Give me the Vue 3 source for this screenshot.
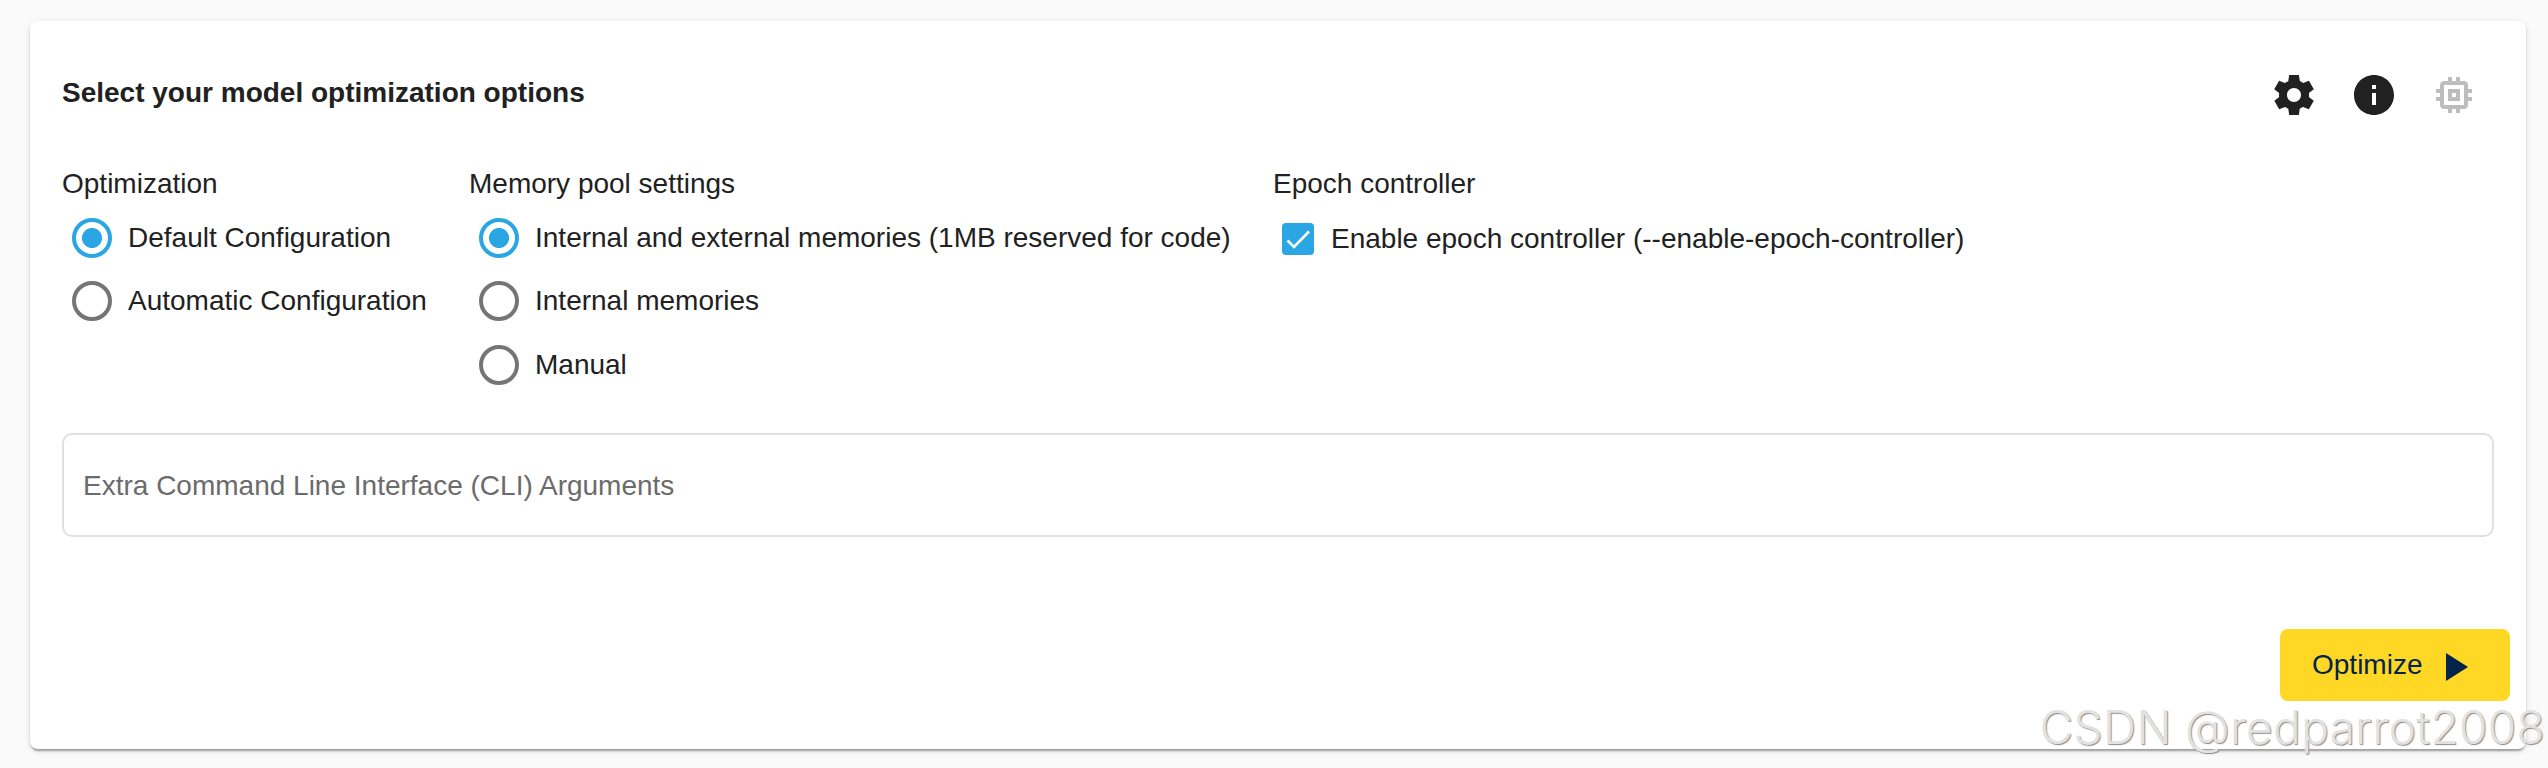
<template>
  <div class="page">
    <section class="card">
      <header class="card-header">
        <h2 class="title">Select your model optimization options</h2>
        <div class="actions">
          <button
            v-for="icon in icons"
            :key="icon.name"
            class="icon-btn"
            :disabled="icon.disabled"
            :aria-label="icon.name"
          >
            <svg viewBox="0 0 24 24"><path :d="icon.path" /></svg>
          </button>
        </div>
      </header>

      <div class="options">
        <div v-for="group in groups" :key="group.key" class="group" :class="group.key">
          <div class="group-label">{{ group.label }}</div>
          <label v-for="opt in group.options" :key="opt" class="option">
            <input v-model="selected[group.key]" class="radio" type="radio" :name="group.key" :value="opt">
            <span class="option-text">{{ opt }}</span>
          </label>
        </div>

        <div class="group">
          <div class="group-label">Epoch controller</div>
          <label class="option option-check">
            <input v-model="epochController" class="native-check" type="checkbox">
            <span class="checkbox" :class="{ checked: epochController }">
              <svg v-if="epochController" viewBox="0 0 32 32">
                <path d="M5.5 17.5L12 24L27 8.5" />
              </svg>
            </span>
            <span class="option-text">Enable epoch controller (--enable-epoch-controller)</span>
          </label>
        </div>
      </div>

      <input
        v-model="cliArgs"
        class="cli-input"
        type="text"
        placeholder="Extra Command Line Interface (CLI) Arguments"
      >

      <footer class="card-footer">
        <button class="optimize-btn">
          <span>Optimize</span>
          <svg viewBox="0 0 24 24"><path d="M8 5v14l11-7z" /></svg>
        </button>
      </footer>
    </section>

    <div class="watermark">CSDN @redparrot2008</div>
  </div>
</template>

<script setup>
import { reactive, ref } from 'vue'

const icons = [
  {
    name: 'settings',
    path: 'M19.44 12.99l.01-.02c.04-.32.08-.64.08-.98 0-.34-.03-.66-.07-.99l.01.02 2.44-1.92-2.43-4.22-2.87 1.16.01.01c-.52-.4-1.09-.74-1.71-1h.01L14.44 2H9.57l-.44 3.07h.01c-.62.26-1.19.6-1.71 1l.01-.01-2.88-1.17-2.44 4.22 2.44 1.92.01-.02c-.04.33-.07.65-.07.99 0 .34.03.66.08.98l.01.02-2.1 1.65-.33.26 2.43 4.2 2.88-1.15-.02-.04c.53.41 1.1.75 1.73 1.01h-.03L9.58 22h4.85s.03-.18.06-.42l.38-2.65h-.01c.62-.26 1.2-.6 1.73-1.01l-.02.04 2.88 1.15 2.43-4.2s-.14-.12-.33-.26l-2.11-1.66zM12 15.5c-1.93 0-3.5-1.57-3.5-3.5s1.57-3.5 3.5-3.5 3.5 1.57 3.5 3.5-1.57 3.5-3.5 3.5z',
  },
  {
    name: 'info',
    path: 'M12 2C6.48 2 2 6.48 2 12s4.48 10 10 10 10-4.48 10-10S17.52 2 12 2zm1 15h-2v-6h2v6zm0-8h-2V7h2v2z',
  },
  {
    name: 'memory',
    disabled: true,
    path: 'M15 9H9v6h6V9zm-2 4h-2v-2h2v2zm8-2V9h-2V7c0-1.1-.9-2-2-2h-2V3h-2v2h-2V3H9v2H7c-1.1 0-2 .9-2 2v2H3v2h2v2H3v2h2v2c0 1.1.9 2 2 2h2v2h2v-2h2v2h2v-2h2c1.1 0 2-.9 2-2v-2h2v-2h-2v-2h2zm-4 6H7V7h10v10z',
  },
]

const groups = [
  {
    key: 'optimization',
    label: 'Optimization',
    options: ['Default Configuration', 'Automatic Configuration'],
  },
  {
    key: 'memory',
    label: 'Memory pool settings',
    options: [
      'Internal and external memories (1MB reserved for code)',
      'Internal memories',
      'Manual',
    ],
  },
]

const selected = reactive({
  optimization: 'Default Configuration',
  memory: 'Internal and external memories (1MB reserved for code)',
})
const epochController = ref(true)
const cliArgs = ref('')
</script>

<style>
body {
  background: #fafafa;
}
</style>

<style scoped>
.page {
  position: relative;
  box-sizing: border-box;
  height: 768px;
  padding: 21px 22px 19px 30px;
  overflow: hidden;
  background: #fafafa;
  color: #212121;
  font-family: "Liberation Sans", Arial, sans-serif;
  font-size: 28px;
}

.card {
  display: flex;
  flex-direction: column;
  box-sizing: border-box;
  height: 728px;
  padding: 32px 16px 48px 32px;
  border-radius: 8px;
  background: #fff;
  box-shadow: 0 4px 2px -2px rgba(0, 0, 0, 0.2), 0 2px 2px 0 rgba(0, 0, 0, 0.14),
    0 2px 6px 0 rgba(0, 0, 0, 0.12);
}

.card-header {
  display: flex;
  justify-content: space-between;
  height: 84px;
  padding-right: 16px;
}

.title {
  margin: 24px 0 0;
  font-size: 28px;
  font-weight: bold;
  line-height: 32px;
}

.actions {
  display: flex;
}

.icon-btn {
  width: 80px;
  height: 84px;
  padding: 0;
  border: none;
  background: none;
  color: #212121;
}

.icon-btn:disabled {
  color: #bdbdbd;
}

.icon-btn svg {
  display: block;
  width: 48px;
  height: 48px;
  margin: 0 auto;
  fill: currentColor;
}

.options {
  display: flex;
  box-sizing: border-box;
  height: 296px;
  padding-top: 31px;
}

.group.optimization {
  width: 407px;
}

.group.memory {
  width: 804px;
}

.group-label {
  height: 38px;
  line-height: 32px;
}

.option {
  display: flex;
  align-items: center;
  height: 63.5px;
  padding-left: 10px;
}

.option-text {
  line-height: 32px;
  white-space: nowrap;
}

.radio {
  flex: none;
  appearance: none;
  box-sizing: border-box;
  width: 40px;
  height: 40px;
  margin: 0 16px 0 0;
  border: 4px solid #757575;
  border-radius: 50%;
}

.radio:checked {
  border-color: #29a6e3;
  background: radial-gradient(circle, #29a6e3 9.6px, transparent 10.4px);
}

.option-check {
  height: 66px;
  padding-left: 9px;
}

.native-check {
  display: none;
}

.checkbox {
  flex: none;
  box-sizing: border-box;
  width: 32px;
  height: 32px;
  margin-right: 17px;
  border: 4px solid #757575;
  border-radius: 4px;
}

.checkbox.checked {
  border: none;
  background: #29a6e3;
}

.checkbox svg {
  display: block;
  fill: none;
  stroke: #fff;
  stroke-width: 2.6;
}

.cli-input {
  box-sizing: border-box;
  width: 2432px;
  height: 104px;
  padding: 1px 19px 0;
  border: 2px solid #e0e0e0;
  border-radius: 10px;
  outline: none;
  background: #fff;
  color: #212121;
  font-family: inherit;
  font-size: 28px;
}

.cli-input::placeholder {
  color: #6b6b6b;
  opacity: 1;
}

.card-footer {
  display: flex;
  justify-content: flex-end;
  margin-top: auto;
}

.optimize-btn {
  display: flex;
  gap: 8px;
  width: 230px;
  height: 72px;
  padding: 0 0 0 32px;
  border: none;
  border-radius: 8px;
  background: #ffd825;
  color: #03234b;
  font-family: inherit;
  font-size: 28px;
  line-height: 72px;
}

.optimize-btn svg {
  width: 48px;
  height: 48px;
  margin-top: 14px;
  fill: currentColor;
}

.watermark {
  position: absolute;
  right: 3px;
  bottom: 9px;
  color: #e2e2e2;
  font-family: Inter, "Noto Sans", sans-serif;
  font-size: 46px;
  font-weight: 300;
  letter-spacing: 0.35px;
  line-height: 64px;
  text-shadow: 1px 1px 1px #8c8c8c;
}
</style>
